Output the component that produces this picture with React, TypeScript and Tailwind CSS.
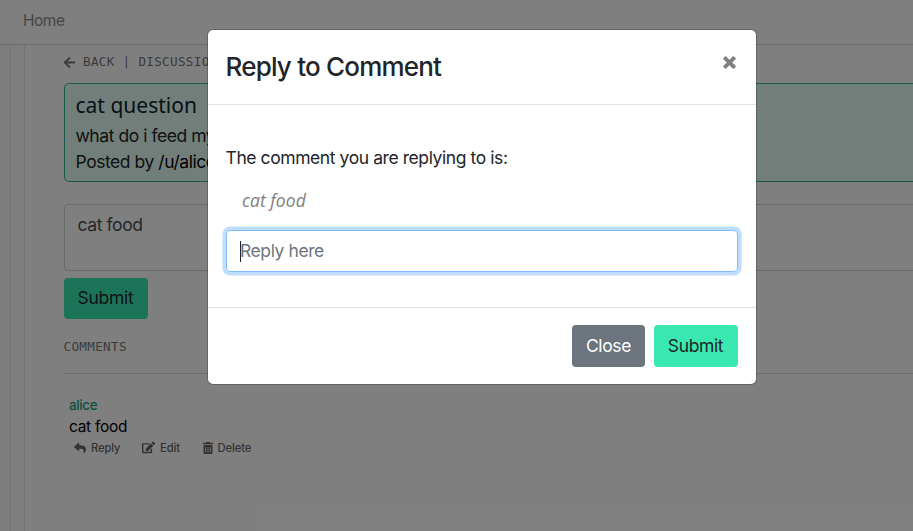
import React from "react";
import { FaArrowLeft, FaEdit, FaReply, FaTrashAlt } from "react-icons/fa";

function Action({ icon, label, className }: { icon: React.ReactNode; label: string; className: string }) {
  return (
    <button className={`flex items-center ${className}`}>
      {icon}
      <span>{label}</span>
    </button>
  );
}

function Page() {
  return (
    <div className="flex h-[531px] flex-col bg-white text-[#212529]">
      <nav className="flex h-[45px] shrink-0 items-center border-b border-[#d4d4d4] pb-[2px] pl-[23px] text-[15.5px] tracking-[-0.5px] text-[#8c8c8c]">
        Home
      </nav>
      <div className="flex min-h-0 flex-1">
        <div className="w-[11px] shrink-0 border-r border-[#e6e6e6] bg-[#fafafa]" />
        <div className="w-[14px] shrink-0 border-r border-[#e9e9e9] bg-[#fcfcfc]" />
        <main className="flex min-w-0 flex-1 flex-col pl-[39px]">
          <div className="mt-[7px] flex h-[20px] items-center font-['DejaVu_Sans_Mono',monospace] text-[12.6px] tracking-[0.33px] whitespace-pre text-[#777]">
            <FaArrowLeft className="-ml-px mr-[7px] size-[13px]" />
            <span className="pt-px">BACK | DISCUSSIONS</span>
          </div>
          <section className="-mr-8 mt-[11px] h-[99px] shrink-0 rounded-[5px] border border-[#2fb98c] bg-[#e3fdf2] pl-[10.5px]">
            <h1 className="mt-[6px] font-['Noto_Sans',sans-serif] text-[21px] leading-[30px] text-[#0b2530]">cat question</h1>
            <p className="mt-[3px] text-[17.5px] leading-[26px] tracking-[-0.45px]">what do i feed my cat</p>
            <p className="text-[17.5px] leading-[26px] tracking-[-0.45px]">
              Posted by <span className="text-black">/u/alice</span>
            </p>
          </section>
          <div className="-mr-8 mt-[22px] h-[67px] shrink-0 rounded-[4px] border border-[#ced4da] pt-[7px] pl-[12.5px] text-[17.5px] leading-[26px] tracking-[-0.4px] text-[#495057]">
            cat food
          </div>
          <button className="mt-[7px] h-[41px] w-[84px] shrink-0 rounded-[4px] bg-[#38e8b0] pr-px pb-px text-[17.5px] tracking-[-0.3px]">Submit</button>
          <h2 className="mt-[18px] h-[37px] shrink-0 border-b border-[#dcdcdc] font-['DejaVu_Sans_Mono',monospace] text-[12.6px] leading-[20px] tracking-[0.33px] text-[#777]">
            <span className="-ml-[0.5px]">COMMENTS</span>
          </h2>
          <article className="pt-[21px] pl-[5px]">
            <div className="text-[13.3px] leading-[21px] font-medium tracking-[-0.3px] text-[#12a47c]">alice</div>
            <p className="text-[15.5px] leading-[22px] tracking-[-0.3px] text-black">cat food</p>
            <div className="mt-px flex h-[18px] items-center pl-[5px] text-[11.2px] font-medium tracking-[-0.1px] text-[#666]">
              <Action className="w-[68px] gap-[5px]" icon={<FaReply className="size-[12px]" />} label="Reply" />
              <Action className="w-[59.5px] gap-[5px]" icon={<FaEdit className="size-[13px]" />} label="Edit" />
              <Action className="gap-[4px]" icon={<FaTrashAlt className="size-[12px]" />} label="Delete" />
            </div>
          </article>
        </main>
      </div>
    </div>
  );
}

function ReplyDialog() {
  return (
    <div className="absolute inset-0 bg-black/50 pt-[29px] pl-[207px]">
      <div role="dialog" className="h-[356px] w-[550px] rounded-[6px] border border-black/20 bg-white bg-clip-padding text-[#212529]">
        <header className="flex h-[75px] justify-between border-b border-[#dee2e6] pr-[20px] pl-[17.5px]">
          <h2 className="mt-[17px] text-[26px] leading-[40px] font-medium tracking-[-0.8px]">Reply to Comment</h2>
          <button aria-label="Close" className="mt-[26px] size-[13px] text-[#808080]">
            <svg viewBox="0 0 13 13" className="size-[13px]" stroke="currentColor" strokeWidth="3.8">
              <path d="M1.3 1.3 11.7 11.7M11.7 1.3 1.3 11.7" />
            </svg>
          </button>
        </header>
        <div className="h-[202px] px-[18px] pt-[40px] text-[17.5px] tracking-[-0.42px]">
          <p className="-ml-[0.5px] leading-[26px]">The comment you are replying to is:</p>
          <p className="mt-[16px] pl-[16px] font-['Open_Sans',sans-serif] text-[17.5px] leading-[26px] font-medium tracking-[0.05px] text-[#808080] italic">cat food</p>
          <div className="mt-[17px] flex h-[42px] items-center rounded-[4px] border border-[#80bdff] pl-[13px] text-[#6c757d] shadow-[0_0_0_3.5px_rgba(0,123,255,0.25)]">
            <span className="h-[21px] w-px bg-[#212529]" />
            <span className="-ml-px tracking-[-0.42px]">Reply here</span>
          </div>
        </div>
        <footer className="flex h-[77px] justify-end gap-[9px] border-t border-[#dee2e6] pt-[17px] pr-[18px] text-[17.5px] tracking-[-0.35px]">
          <button className="h-[42px] w-[73px] rounded-[4px] bg-[#6c757d] pt-px text-white">Close</button>
          <button className="h-[42px] w-[84px] rounded-[4px] bg-[#38e8b0] pt-px pr-px">Submit</button>
        </footer>
      </div>
    </div>
  );
}

export default function App() {
  return (
    <div className="relative h-[531px] overflow-hidden font-['Inter',sans-serif]">
      <Page />
      <ReplyDialog />
    </div>
  );
}
